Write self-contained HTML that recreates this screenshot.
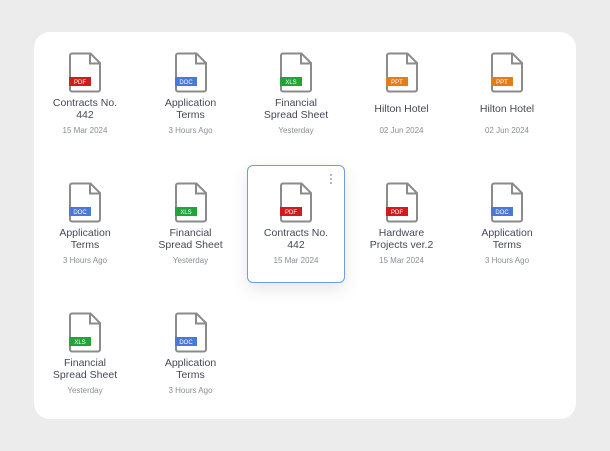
<!DOCTYPE html>
<html><head><style>
body{margin:0;width:610px;height:451px;background:#ececec;font-family:"Liberation Sans",sans-serif;overflow:hidden;position:relative}
.card{position:absolute;left:34px;top:32px;width:542px;height:387px;background:#fff;border-radius:16px}
.it{position:absolute;width:100px;text-align:center}
.ic{position:absolute;left:34px;top:0;width:33px;height:41px}
.t{position:absolute;top:44px;left:0;width:100px;height:26px;display:flex;align-items:center;justify-content:center;font-size:10.5px;line-height:12px;color:#454957}
.d{position:absolute;top:74px;left:0;width:100px;font-size:8px;color:#8a8d94}
.sel{position:absolute;left:247px;top:165px;width:96px;height:116px;border:1px solid #6f9de0;border-radius:6px;background:#fff;box-shadow:0 6px 16px rgba(0,0,0,.10)}
.dots{position:absolute;left:330px;top:174px;width:3px}
.dots i{display:block;width:2.4px;height:2.4px;border-radius:50%;background:#8aa6cc;margin-bottom:1.6px}
</style></head><body>
<div class="card"></div>
<div class="sel"></div>
<div class="dots"><i></i><i></i><i></i></div>
<svg width="0" height="0" style="position:absolute"><defs>
<symbol id="f" viewBox="0 0 33 41"><path d="M3 1.5H21.5L31 11V37.5a2 2 0 0 1-2 2H3a2 2 0 0 1-2-2V3.5a2 2 0 0 1 2-2Z" fill="#fff" stroke="#8b8b8b" stroke-width="2"/><path d="M21 1.5V11.5H31" fill="none" stroke="#8b8b8b" stroke-width="2"/></symbol>
</defs></svg>
<div id="g"></div>
<script>
const items=[
[0,0,'PDF','#d21b1b','Contracts No.<br>442','15 Mar 2024'],
[1,0,'DOC','#4a78d6','Application<br>Terms','3 Hours Ago'],
[2,0,'XLS','#22a43a','Financial<br>Spread Sheet','Yesterday'],
[3,0,'PPT','#e77b16','Hilton Hotel','02 Jun 2024'],
[4,0,'PPT','#e77b16','Hilton Hotel','02 Jun 2024'],
[0,1,'DOC','#4a78d6','Application<br>Terms','3 Hours Ago'],
[1,1,'XLS','#22a43a','Financial<br>Spread Sheet','Yesterday'],
[2,1,'PDF','#d21b1b','Contracts No.<br>442','15 Mar 2024'],
[3,1,'PDF','#d21b1b','Hardware<br>Projects ver.2','15 Mar 2024'],
[4,1,'DOC','#4a78d6','Application<br>Terms','3 Hours Ago'],
[0,2,'XLS','#22a43a','Financial<br>Spread Sheet','Yesterday'],
[1,2,'DOC','#4a78d6','Application<br>Terms','3 Hours Ago']];
let h='';
for(const [c,r,b,col,t,d] of items){
const x=85+c*105.5-50, y=52+r*130;
h+=`<div class="it" style="left:${x}px;top:${y}px"><svg class="ic" viewBox="0 0 33 41"><use href="#f"/><rect x="0" y="25" width="22" height="9" fill="${col}"/><text x="11" y="32" font-size="6" fill="#fff" text-anchor="middle" font-family="Liberation Sans">${b}</text></svg><div class="t">${t}</div><div class="d">${d}</div></div>`;}
document.getElementById('g').innerHTML=h;
</script>
</body></html>
